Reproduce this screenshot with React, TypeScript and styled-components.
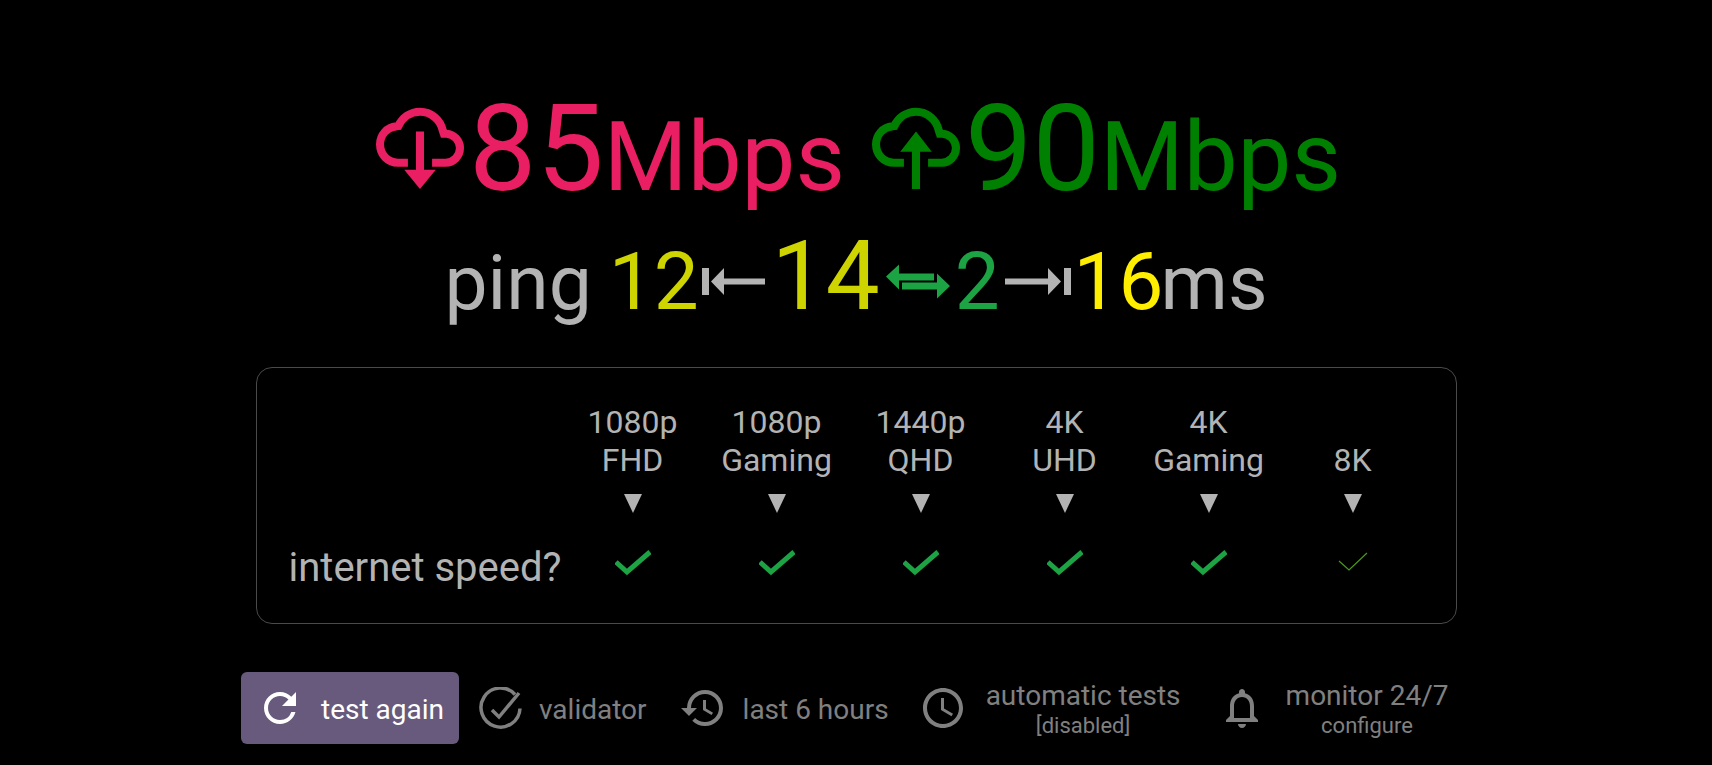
import React from 'react';
import styled, { createGlobalStyle } from 'styled-components';
import { MdRefresh, MdHistory, MdAccessTime, MdNotificationsNone } from 'react-icons/md';

type TColored = {
  color: string;
};

type TArrow = {
  $width: number;
  $left: number;
  $right: number;
};

const GlobalStyle = createGlobalStyle`
  html, body {
    margin: 0;
    height: 100%;
    background: #000;
    font-family: Roboto, "Liberation Sans", sans-serif;
  }
`;

const Page = styled.main`
  display: flex;
  flex-direction: column;
  align-items: center;
  width: 1712px;
  height: 765px;
  overflow: hidden;
  background: #000;
`;

const SpeedRow = styled.div`
  display: flex;
  align-items: baseline;
  gap: 27px;
  margin-top: 79px;
  padding-left: 5px;
  height: 140px;
  line-height: 140px;
`;

const Speed = styled.div<TColored>`
  display: flex;
  align-items: baseline;
  color: ${props => props.color};
`;

const SpeedIcon = styled.svg`
  align-self: flex-start;
  width: 88px;
  height: 99px;
  margin-top: 14px;
  fill: currentColor;
`;

const SpeedValue = styled.span`
  font-size: 120px;
  font-weight: 400;
  margin-left: 5px;
`;

const SpeedUnit = styled.span`
  font-size: 96px;
  font-weight: 400;
`;

const PingRow = styled.div`
  display: flex;
  align-items: baseline;
  height: 96px;
  line-height: 96px;
  margin-top: 9px;
  font-size: 76.8px;
  font-weight: 400;
  color: #b3b3b3;
`;

const PingWord = styled.span`
  margin-right: 17px;
`;

const PingUnit = styled.span`
  margin-left: -3px;
`;

const PingValue = styled.span<TColored>`
  font-size: 80px;
  color: ${props => props.color};
`;

const PingBig = styled(PingValue)`
  font-size: 96px;
`;

const ArrowIcon = styled.svg<TArrow>`
  align-self: center;
  width: ${props => props.$width}px;
  height: 40px;
  flex: none;
  margin: 11px ${props => props.$right}px 0 ${props => props.$left}px;
`;

const Card = styled.section`
  box-sizing: border-box;
  width: 1201px;
  height: 257px;
  margin-top: 43px;
  padding: 0 32px;
  border: 1px solid #4a4a4a;
  border-radius: 16px;
  display: flex;
  align-items: flex-start;
  color: #b3b3b3;
`;

const RowLabel = styled.div`
  width: 272px;
  flex: none;
  margin-top: 178px;
  font-size: 40px;
  line-height: 44px;
  white-space: nowrap;
`;

const Column = styled.div`
  width: 144px;
  flex: none;
  display: flex;
  flex-direction: column;
  align-items: center;
  padding-top: 35px;
`;

const ColumnTitle = styled.div`
  height: 76px;
  display: flex;
  flex-direction: column;
  justify-content: flex-end;
  text-align: center;
  font-size: 32px;
  line-height: 38px;
  white-space: nowrap;
`;

const Pointer = styled.div`
  width: 0;
  height: 0;
  margin-top: 15px;
  border-left: 9.5px solid transparent;
  border-right: 9.5px solid transparent;
  border-top: 19px solid #b3b3b3;
`;

const CheckIcon = styled.svg`
  width: 36px;
  height: 28px;
  margin-top: 36px;
  fill: none;
`;

const Footer = styled.nav`
  display: flex;
  align-items: center;
  height: 72px;
  margin-top: 48px;
  width: 1230px;
`;

const AgainButton = styled.button`
  display: flex;
  align-items: center;
  gap: 25px;
  width: 218px;
  height: 72px;
  padding: 2px 0 0 23px;
  border: 0;
  border-radius: 6px;
  background: #675a7c;
  color: #fff;
  font: 400 28px Roboto, sans-serif;
  white-space: nowrap;
`;

const AgainIcon = styled(MdRefresh)`
  flex: none;
  margin: -2px -8px 0;
`;

const FooterItem = styled.div<{ $gap: number; $left: number }>`
  display: flex;
  align-items: center;
  gap: ${props => props.$gap}px;
  margin-left: ${props => props.$left}px;
  color: #808080;
  font-size: 28px;
  white-space: nowrap;
`;

const FooterText = styled.span`
  padding-top: 2px;
`;

const Stack = styled.div`
  display: flex;
  flex-direction: column;
  align-items: center;
  padding-top: 3px;
`;

const StackTitle = styled.span`
  line-height: 32px;
`;

const StackNote = styled.span`
  margin-top: 1px;
  font-size: 22px;
  line-height: 26px;
`;

const CLOUD =
  'M8.7 19H6C3.2 19 1.1 16.8 1.1 14C1.1 11.5 3 9.3 5.5 9.1L6.1 9C7.2 6.7 9.4 5.1 12 5.1C15 5.1 17.6 7.3 18.2 10.2L18.5 11.1L19.2 11.1C21.3 11.2 22.9 13 22.9 15C22.9 17.2 21.1 19 19 19H15.3';

const columns = [
  { top: '1080p', bottom: 'FHD' },
  { top: '1080p', bottom: 'Gaming' },
  { top: '1440p', bottom: 'QHD' },
  { top: '4K', bottom: 'UHD' },
  { top: '4K', bottom: 'Gaming' },
  { top: '', bottom: '8K', thin: true }
];

function App() {
  return (
    <Page>
      <GlobalStyle />
      <SpeedRow>
        <Speed color="#e91e63">
          <SpeedIcon viewBox="0 0 24 27">
            <path d={CLOUD} fill="none" stroke="currentColor" strokeWidth="2.2" />
            <path d="M10.9 10.5h2.2v10.4h3.2L12 26.2l-4.3-5.3h3.2z" />
          </SpeedIcon>
          <SpeedValue>85</SpeedValue>
          <SpeedUnit>Mbps</SpeedUnit>
        </Speed>
        <Speed color="#008000">
          <SpeedIcon viewBox="0 0 24 27">
            <path d={CLOUD} fill="none" stroke="currentColor" strokeWidth="2.2" />
            <path d="M12 10.5l4.3 5.5h-3.2v10.2h-2.2V16H7.7z" />
          </SpeedIcon>
          <SpeedValue>90</SpeedValue>
          <SpeedUnit>Mbps</SpeedUnit>
        </Speed>
      </SpeedRow>

      <PingRow>
        <PingWord>ping</PingWord>
        <PingValue color="#ced400">12</PingValue>
        <ArrowIcon $width={70} $left={3} $right={0} viewBox="0 0 70 40">
          <path d="M0 6h7v27H0zM9 19.5L22 6v10.500h41v6H22V33z" fill="#b3b3b3" />
        </ArrowIcon>
        <PingBig color="#ced400">14</PingBig>
        <ArrowIcon $width={66} $left={4} $right={5} viewBox="0 -2.5 66 40">
          <path d="M2 12L15 0v9h35v7H15v9zM18 18h35V9l13 12.500-13 12.500v-9H18z" fill="#1ba344" />
        </ArrowIcon>
        <PingValue color="#1ba344">2</PingValue>
        <ArrowIcon $width={70} $left={1} $right={3} viewBox="0 0 70 40">
          <path d="M63 6h7v27h-7zM4 16.500h43V6l13 13.500L47 33V22.500H4z" fill="#b3b3b3" />
        </ArrowIcon>
        <PingValue color="#ffee00">16</PingValue>
        <PingUnit>ms</PingUnit>
      </PingRow>

      <Card>
        <RowLabel>internet speed?</RowLabel>
        {columns.map(col => (
          <Column key={col.top + col.bottom}>
            <ColumnTitle>
              {col.top && <span>{col.top}</span>}
              <span>{col.bottom}</span>
            </ColumnTitle>
            <Pointer />
            <CheckIcon viewBox="0 0 36 28">
              <path
                d={col.thin ? 'M4 12l10 9L32 4' : 'M1 13l11 10L35 3'}
                stroke={col.thin ? '#4a9a1e' : '#1ba344'}
                strokeWidth={col.thin ? 1.2 : 5}
              />
            </CheckIcon>
          </Column>
        ))}
      </Card>

      <Footer>
        <AgainButton>
          <AgainIcon size={48} />
          test again
        </AgainButton>
        <FooterItem $gap={17} $left={20}>
          <svg width="43" height="43" viewBox="0 0 43 43" fill="none" stroke="currentColor" strokeWidth="3.500">
            <path d="M36 7.500A19.500 19.500 0 1 0 41 21.500" />
            <path d="M13 23l7 7L40 6" />
          </svg>
          <FooterText>validator</FooterText>
        </FooterItem>
        <FooterItem $gap={16} $left={32}>
          <MdHistory size={48} />
          <FooterText>last 6 hours</FooterText>
        </FooterItem>
        <FooterItem $gap={19} $left={30}>
          <MdAccessTime size={48} />
          <Stack>
            <StackTitle>automatic tests</StackTitle>
            <StackNote>[disabled]</StackNote>
          </Stack>
        </FooterItem>
        <FooterItem $gap={20} $left={37}>
          <MdNotificationsNone size={48} />
          <Stack>
            <StackTitle>monitor 24/7</StackTitle>
            <StackNote>configure</StackNote>
          </Stack>
        </FooterItem>
      </Footer>
    </Page>
  );
}

export default App;
